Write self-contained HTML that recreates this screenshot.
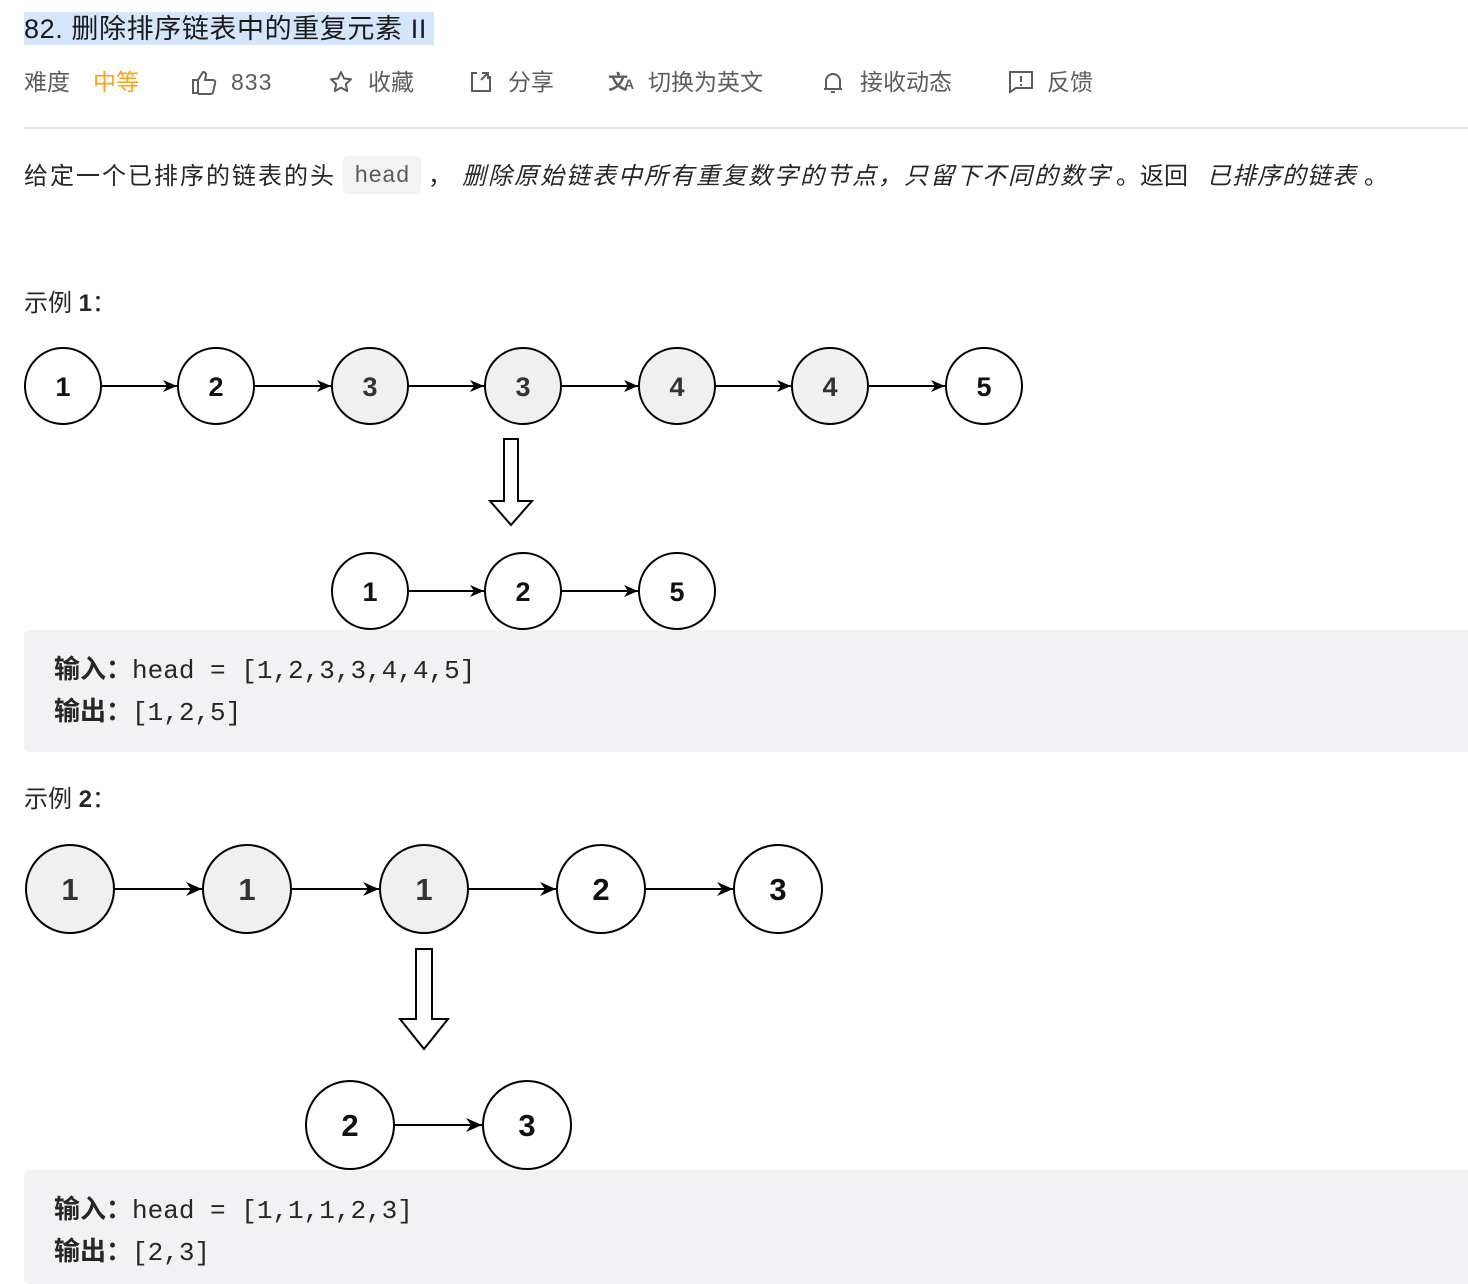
<!DOCTYPE html>
<html><head><meta charset="utf-8"><style>
body{margin:0;width:1468px;height:1284px;background:#fff;position:relative;overflow:hidden;font-family:"Liberation Sans","Noto Sans CJK SC",sans-serif;color:#262626}
.a{position:absolute;white-space:nowrap}
.m{font-size:23px;color:#5c5c5c;top:63px;line-height:38px}
.d{font-size:24px;top:157px;color:#262626;line-height:40px}
.i{font-style:italic}
.box{position:absolute;left:24px;right:0;background:#f2f2f4;border-radius:6px 0 0 6px}
.code{font-family:"Liberation Mono","Noto Sans CJK SC",monospace;font-size:26px;color:#262626}
.code b{font-family:"Liberation Sans","Noto Sans CJK SC",sans-serif}
</style></head><body>
<div class="a" style="left:24px;top:12px;height:33px;width:410px;background:#d5e5fb"></div>
<div class="a" style="left:24px;top:13px;font-size:27px;color:#1a1a1a;line-height:33px;letter-spacing:0.6px">82. 删除排序链表中的重复元素 II</div>

<div class="a m" style="left:24px">难度</div>
<div class="a m" style="left:93px;color:#ffa116">中等</div>
<svg class="a" style="left:190px;top:69px" width="28" height="26" viewBox="0 0 28 26" fill="none" stroke="#5c5c5c" stroke-width="2"><path d="M3 11h5v13H3zM8 11l5-8c2 0 3 1 3 3l-1 5h8c1.5 0 2.5 1.3 2.2 2.7l-2 9c-.3 1.3-1.3 2.3-2.7 2.3H8"/></svg>
<div class="a m" style="left:231px;letter-spacing:1px">833</div>
<svg class="a" style="left:329px;top:70px" width="24" height="24" viewBox="0 0 24 24" fill="none" stroke="#5c5c5c" stroke-width="2" stroke-linejoin="round"><path d="M12 2l3 6.5 7 .8-5.2 4.8 1.4 7L12 17.6 5.8 21.1l1.4-7L2 9.3l7-.8z"/></svg>
<div class="a m" style="left:368px">收藏</div>
<svg class="a" style="left:469px;top:70px" width="24" height="24" viewBox="0 0 24 24" fill="none" stroke="#5c5c5c" stroke-width="2"><path d="M8 3H3v18h18V6M13 3h6v6M19 3l-7 7"/></svg>
<div class="a m" style="left:508px">分享</div>
<div class="a" style="left:608px;top:66px;font-size:20px;color:#5c5c5c;font-weight:bold">文<span style="font-size:14px;margin-left:-4px">A</span></div>
<div class="a m" style="left:648px">切换为英文</div>
<svg class="a" style="left:822px;top:70px" width="22" height="26" viewBox="0 0 22 26" fill="none" stroke="#5c5c5c" stroke-width="2"><path d="M4 19V11a7 7 0 0 1 14 0v8M2 19h18M9 22h4"/></svg>
<div class="a m" style="left:860px">接收动态</div>
<svg class="a" style="left:1008px;top:70px" width="26" height="24" viewBox="0 0 26 24" fill="none" stroke="#5c5c5c" stroke-width="2"><path d="M2 2h22v16H8l-6 4zM13 6v6M13 14v2"/></svg>
<div class="a m" style="left:1047px">反馈</div>
<div class="a" style="left:24px;right:0;top:127px;height:2px;background:#e6e6e6"></div>

<div class="a d" style="left:24px;letter-spacing:2px">给定一个已排序的链表的头</div>
<div class="a" style="left:343px;top:156px;width:78px;height:38px;background:#f2f3f5;border-radius:5px;font-family:'Liberation Mono',monospace;font-size:23px;color:#5c5c5c;line-height:40px;text-align:center">head</div>
<div class="a d" style="left:428px">，</div>
<div class="a d i" style="left:462px;letter-spacing:2px">删除原始链表中所有重复数字的节点，只留下不同的数字</div>
<div class="a d" style="left:1116px">。返回</div>
<div class="a d i" style="left:1207px;letter-spacing:1px">已排序的链表</div>
<div class="a d" style="left:1364px">。</div>

<div class="a" style="left:24px;top:283px;font-size:24px">示例 <b>1</b>：</div>
<div class="a" style="left:24px;top:779px;font-size:24px">示例 <b>2</b>：</div>

<svg class="a" style="left:0;top:0" width="1468" height="1284">
<defs><marker id="h" markerWidth="14" markerHeight="12" refX="14" refY="6" orient="auto" markerUnits="userSpaceOnUse"><path d="M0 0L14 6L0 12L4 6z" fill="#000"/></marker>
<marker id="h2" markerWidth="16" markerHeight="14" refX="16" refY="7" orient="auto" markerUnits="userSpaceOnUse"><path d="M0 0L16 7L0 14L5 7z" fill="#000"/></marker></defs>
<g stroke="#000" stroke-width="2" font-family="Liberation Sans,sans-serif" font-weight="bold" font-size="27" text-anchor="middle">
<g marker-end="url(#h)"><line x1="102" y1="386" x2="177" y2="386"/><line x1="255" y1="386" x2="331" y2="386"/><line x1="409" y1="386" x2="484" y2="386"/><line x1="562" y1="386" x2="638" y2="386"/><line x1="716" y1="386" x2="791" y2="386"/><line x1="869" y1="386" x2="945" y2="386"/>
<line x1="409" y1="591" x2="484" y2="591"/><line x1="562" y1="591" x2="638" y2="591"/></g>
<circle cx="63" cy="386" r="38" fill="#fff"/><circle cx="216" cy="386" r="38" fill="#fff"/><circle cx="370" cy="386" r="38" fill="#f0f0f0"/><circle cx="523" cy="386" r="38" fill="#f0f0f0"/><circle cx="677" cy="386" r="38" fill="#f0f0f0"/><circle cx="830" cy="386" r="38" fill="#f0f0f0"/><circle cx="984" cy="386" r="38" fill="#fff"/>
<circle cx="370" cy="591" r="38" fill="#fff"/><circle cx="523" cy="591" r="38" fill="#fff"/><circle cx="677" cy="591" r="38" fill="#fff"/>
<path d="M504 439h14v62h14l-21 24-21-24h14z" fill="#fff"/>
<g marker-end="url(#h2)"><line x1="115" y1="889" x2="202" y2="889"/><line x1="292" y1="889" x2="379" y2="889"/><line x1="469" y1="889" x2="556" y2="889"/><line x1="646" y1="889" x2="733" y2="889"/><line x1="395" y1="1125" x2="482" y2="1125"/></g>
<circle cx="70" cy="889" r="44" fill="#f0f0f0"/><circle cx="247" cy="889" r="44" fill="#f0f0f0"/><circle cx="424" cy="889" r="44" fill="#f0f0f0"/><circle cx="601" cy="889" r="44" fill="#fff"/><circle cx="778" cy="889" r="44" fill="#fff"/>
<circle cx="350" cy="1125" r="44" fill="#fff"/><circle cx="527" cy="1125" r="44" fill="#fff"/>
<path d="M416 949h16v70h16l-24 30-24-30h16z" fill="#fff"/>
</g>
<g font-family="Liberation Sans,sans-serif" font-weight="bold" font-size="27" text-anchor="middle" fill="#111">
<text x="63" y="396">1</text><text x="216" y="396">2</text><text x="370" y="396" fill="#333">3</text><text x="523" y="396" fill="#333">3</text><text x="677" y="396" fill="#333">4</text><text x="830" y="396" fill="#333">4</text><text x="984" y="396">5</text>
<text x="370" y="601">1</text><text x="523" y="601">2</text><text x="677" y="601">5</text>
<g font-size="31"><text x="70" y="900" fill="#333">1</text><text x="247" y="900" fill="#333">1</text><text x="424" y="900" fill="#333">1</text><text x="601" y="900">2</text><text x="778" y="900">3</text><text x="350" y="1136">2</text><text x="527" y="1136">3</text></g>
</g>
</svg>

<div class="box" style="top:630px;height:122px"></div>
<div class="a code" style="left:54px;top:649px"><b>输入：</b>head = [1,2,3,3,4,4,5]</div>
<div class="a code" style="left:54px;top:691px"><b>输出：</b>[1,2,5]</div>
<div class="box" style="top:1170px;height:114px"></div>
<div class="a code" style="left:54px;top:1189px"><b>输入：</b>head = [1,1,1,2,3]</div>
<div class="a code" style="left:54px;top:1231px"><b>输出：</b>[2,3]</div>
</body></html>
